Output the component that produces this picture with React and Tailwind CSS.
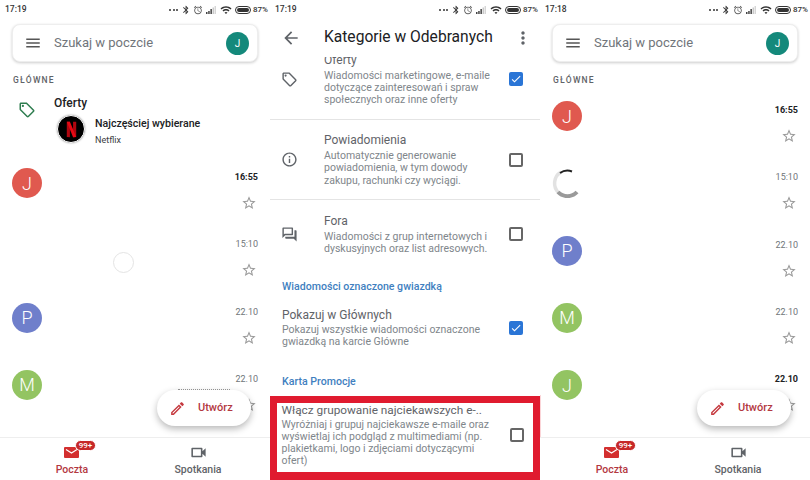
import React from "react";

const paths = {
  menu: "M3 18h18v-2H3v2zm0-5h18v-2H3v2zm0-7v2h18V6H3z",
  back: "M20 11H7.83l5.59-5.59L12 4l-8 8 8 8 1.41-1.41L7.83 13H20v-2z",
  more: "M12 8c1.1 0 2-.9 2-2s-.9-2-2-2-2 .9-2 2 .9 2 2 2zm0 2c-1.1 0-2 .9-2 2s.9 2 2 2 2-.9 2-2-.9-2-2-2zm0 6c-1.1 0-2 .9-2 2s.9 2 2 2 2-.9 2-2-.9-2-2-2z",
  tag: "M21.41 11.58l-9-9C12.05 2.22 11.55 2 11 2H4c-1.1 0-2 .9-2 2v7c0 .55.22 1.05.59 1.42l9 9c.36.36.86.58 1.41.58s1.05-.22 1.41-.59l7-7c.37-.36.59-.86.59-1.41s-.23-1.06-.59-1.42zM13 20.01L4 11V4h7v-.01l9 9-7 7.02zM6.5 5A1.5 1.5 0 1 0 6.5 8 1.5 1.5 0 1 0 6.5 5z",
  info: "M11 7h2v2h-2zm0 4h2v6h-2zm1-9C6.48 2 2 6.48 2 12s4.48 10 10 10 10-4.48 10-10S17.52 2 12 2zm0 18c-4.41 0-8-3.59-8-8s3.59-8 8-8 8 3.59 8 8-3.59 8-8 8z",
  forum: "M15 4v7H5.17L4 12.17V4h11m1-2H3c-.55 0-1 .45-1 1v14l4-4h10c.55 0 1-.45 1-1V3c0-.55-.45-1-1-1zm5 4h-2v9H6v2c0 .55.45 1 1 1h11l4 4V7c0-.55-.45-1-1-1z",
  star: "M22 9.24l-7.19-.62L12 2 9.19 8.63 2 9.24l5.46 4.73L5.82 21 12 17.27 18.18 21l-1.63-7.03L22 9.24zM12 15.4l-3.76 2.27 1-4.28-3.32-2.88 4.38-.38L12 6.1l1.71 4.04 4.38.38-3.32 2.88 1 4.28L12 15.4z",
  pencil: "M3 17.25V21h3.75L17.81 9.94l-3.75-3.75L3 17.25zM5.92 19H5v-.92l9.06-9.06.92.92L5.92 19zM20.71 5.63l-2.34-2.34c-.2-.2-.45-.29-.71-.29s-.51.1-.7.29l-1.83 1.83 3.75 3.75 1.83-1.83c.39-.39.39-1.02 0-1.41z",
  video: "M15 8v8H5V8h10m1-2H4c-.55 0-1 .45-1 1v10c0 .55.45 1 1 1h12c.55 0 1-.45 1-1v-3.5l4 4v-11l-4 4V7c0-.55-.45-1-1-1z",
  bluetooth: "M17.71 7.71L12 2h-1v7.59L6.41 5 5 6.41 10.59 12 5 17.59 6.41 19 11 14.41V22h1l5.71-5.71-4.3-4.29 4.3-4.29zM13 5.83l1.88 1.88L13 9.59V5.83zm1.88 10.46L13 18.17v-3.76l1.88 1.88z",
  alarm: "M22 5.72l-4.6-3.86-1.29 1.53 4.6 3.86L22 5.72zM7.88 3.39L6.6 1.86 2 5.71l1.29 1.53 4.59-3.85zM12.5 8H11v6l4.75 2.85.75-1.23-4-2.37V8zM12 4c-4.97 0-9 4.03-9 9s4.03 9 9 9 9-4.03 9-9-4.03-9-9-9zm0 16c-3.87 0-7-3.13-7-7s3.13-7 7-7 7 3.13 7 7-3.13 7-7 7z",
  wifi: "M1 9l2 2c4.97-4.97 13.03-4.97 18 0l2-2C16.93 2.93 7.08 2.93 1 9zm8 8l3 3 3-3c-1.65-1.66-4.34-1.66-6 0zm-4-4l2 2c2.76-2.76 7.24-2.76 10 0l2-2C15.14 9.14 8.87 9.14 5 13z",
  check: "M9 16.17L4.83 12l-1.42 1.41L9 19 21 7l-1.41-1.41z",
};

function Icon({ name, className }) {
  return (
    <svg viewBox="0 0 24 24" fill="currentColor" className={className}>
      <path d={paths[name]} />
    </svg>
  );
}

function StatusBar({ time }) {
  return (
    <div className="h-[18px] pt-[1px] flex items-center justify-between pl-[5px] pr-[2px] text-[8.5px] font-medium text-[#333]">
      <span>{time}</span>
      <div className="flex items-center">
        <span className="flex gap-[1.5px] mr-[3px]">
          <i className="w-[2px] h-[2px] bg-[#333] rounded-full" />
          <i className="w-[2px] h-[2px] bg-[#333] rounded-full" />
          <i className="w-[2px] h-[2px] bg-[#333] rounded-full" />
        </span>
        <Icon name="bluetooth" className="w-[10px] h-[10px]" />
        <Icon name="alarm" className="w-[10px] h-[10px] ml-[2px] text-[#555]" />
        <svg viewBox="0 0 10 8" className="w-[10px] h-[8px] ml-[3px]">
          <rect x="0" y="6" width="1.5" height="2" fill="#444" />
          <rect x="2.2" y="5" width="1.5" height="3" fill="#444" />
          <rect x="4.4" y="3" width="1.5" height="5" fill="#444" />
          <rect x="6.6" y="1.5" width="1.2" height="6.5" fill="#bbb" />
          <rect x="8.6" y="0" width="1.2" height="8" fill="#ccc" />
        </svg>
        <Icon name="wifi" className="w-[12px] h-[12px] ml-[4px]" />
        <span className="w-[16px] h-[8px] ml-[3px] rounded-full border border-[#333] p-[1px] flex">
          <i className="flex-1 bg-[#333] rounded-full" />
        </span>
        <span className="ml-[2px] text-[8px]">87%</span>
      </div>
    </div>
  );
}

function SearchCard() {
  return (
    <div className="mx-3 mt-[6px] h-[38px] rounded-lg bg-white border border-[#eee] shadow-[0_1px_3px_rgba(0,0,0,0.2)] flex items-center pl-[11px] pr-[8px]">
      <Icon name="menu" className="w-[18px] h-[18px] text-[#555]" />
      <span className="ml-[12px] flex-1 text-[13px] text-[#70757a]">Szukaj w poczcie</span>
      <span className="w-[23px] h-[23px] rounded-full bg-[#14897b] text-white text-[10px] flex items-center justify-center">J</span>
    </div>
  );
}

function SectionLabel() {
  return (
    <div className="mt-[13px] h-[10px] pl-[13px] text-[8.5px] leading-[10px] font-medium tracking-[0.14em] text-[#5f6368]">
      GŁÓWNE
    </div>
  );
}

function MailRow({ letter, color, time, bold, slot }) {
  return (
    <div className="relative h-[67.33px] shrink-0 flex pl-3 pr-3">
      {letter ? (
        <span className={`w-[30px] h-[30px] rounded-full text-white text-[18px] font-light flex items-center justify-center ${color}`}>
          {letter}
        </span>
      ) : (
        slot
      )}
      <div className="ml-auto flex flex-col items-end pt-[3px]">
        <span className={`h-[12px] text-[9px] leading-[12px] ${bold ? "font-bold text-[#202124]" : "text-[#70757a]"}`}>{time}</span>
        <Icon name="star" className="w-[16px] h-[16px] mt-[12px] mr-[1px] text-[#9a9a9a]" />
      </div>
    </div>
  );
}

function Spinner() {
  return (
    <svg viewBox="0 0 30 30" className="w-[30px] h-[30px]">
      <path d="M9 4 A13 13 0 0 0 7 25" fill="none" stroke="#e2e2e2" strokeWidth="3.5" />
      <path d="M8 5 A13 13 0 0 1 20 3.5" fill="none" stroke="#222" strokeWidth="2" />
      <path d="M6 24 A13 13 0 0 0 25 24" fill="none" stroke="#9a9a9a" strokeWidth="4" />
    </svg>
  );
}

function Fab() {
  return (
    <div className="absolute right-[19px] bottom-[54px] w-[94px] h-[36px] rounded-full bg-white shadow-[0_3px_7px_rgba(0,0,0,0.28)] flex items-center pl-[12px] text-[#b3383f]">
      <Icon name="pencil" className="w-[17px] h-[17px] text-[#c5393f]" />
      <span className="ml-[12px] text-[11px] font-medium">Utwórz</span>
    </div>
  );
}

function BottomNav() {
  return (
    <div className="relative z-10 h-[43px] shrink-0 bg-white border-t border-[#eee] flex justify-center">
      <div className="w-[126px] flex flex-col items-center">
        <div className="relative h-[24px] w-[16px]">
          <svg viewBox="0 0 15 11" className="absolute left-0 top-[9px] w-[15px] h-[11px]">
            <rect width="15" height="11" rx="1" fill="#d32f2f" />
            <path d="M2 2.5 L7.5 6 L13 2.5" fill="none" stroke="#fff" strokeWidth="1.2" />
          </svg>
          <span className="absolute left-[11px] top-[2px] w-[21px] h-[11px] rounded-full bg-[#c62828] border border-white text-white text-[8px] leading-[9px] font-medium text-center">
            99+
          </span>
        </div>
        <span className="mt-[1px] text-[10.5px] leading-[13px] font-medium text-[#b3383f]">Poczta</span>
      </div>
      <div className="w-[126px] flex flex-col items-center text-[#5f6368]">
        <div className="h-[24px] flex items-end">
          <Icon name="video" className="w-[19px] h-[19px]" />
        </div>
        <span className="mt-[1px] text-[10.5px] leading-[13px] font-medium">Spotkania</span>
      </div>
    </div>
  );
}

function Panel({ children }) {
  return <div className="relative w-[270px] h-[480px] shrink-0 overflow-hidden bg-white flex flex-col">{children}</div>;
}

function NetflixLogo() {
  return (
    <span className="w-[28px] h-[28px] rounded-full bg-black border border-white shadow-[0_0_2px_rgba(0,0,0,0.4)] flex items-center justify-center">
      <svg viewBox="0 0 14 20" className="w-[11px] h-[17px]">
        <path d="M1 0h4v20l-4-0.6z" fill="#b0060f" />
        <path d="M9 0h4v19.4l-4 0.6z" fill="#b0060f" />
        <path d="M1 0h4l8 19.4-4 0.6z" fill="#e50914" />
      </svg>
    </span>
  );
}

function MainList() {
  return (
    <Panel>
      <StatusBar time="17:19" />
      <SearchCard />
      <SectionLabel />
      <div className="flex-1 overflow-hidden">
        <div className="h-[83px] flex pl-[18px]">
          <Icon name="tag" className="w-[18px] h-[18px] mt-[16px] text-[#2e7d4f]" />
          <div className="ml-[18px] pt-[10px]">
            <div className="h-[16px] text-[12px] leading-[16px] font-medium text-[#202124]">Oferty</div>
            <div className="flex ml-[3px] mt-[4px]">
              <NetflixLogo />
              <div className="ml-[10px]">
                <div className="text-[10.6px] leading-[14px] font-medium text-[#202124] mt-[2px]">Najczęściej wybierane</div>
                <div className="text-[9px] leading-[12px] mt-[3px] text-[#3c4043]">Netflix</div>
              </div>
            </div>
          </div>
        </div>
        <MailRow letter="J" color="bg-[#e0594f]" time="16:55" bold />
        <MailRow
          time="15:10"
          slot={<span className="absolute left-[113px] top-[17px] w-[21px] h-[21px] rounded-full border border-[#e4e4e4]" />}
        />
        <MailRow letter="P" color="bg-[#6f7fcb]" time="22.10" />
        <MailRow letter="M" color="bg-[#93c462]" time="22.10" />
      </div>
      {/* half-rendered line of text behind the button */}
      <span className="absolute left-[178px] top-[389px] w-[52px] border-t border-dotted border-[#999]" />
      <Fab />
      <BottomNav />
    </Panel>
  );
}

function Checkbox({ checked }) {
  return checked ? (
    <span className="w-[14px] h-[14px] shrink-0 rounded-[2px] bg-[#2a75d6] flex items-center justify-center">
      <Icon name="check" className="w-[12px] h-[12px] text-white" />
    </span>
  ) : (
    <span className="w-[14px] h-[14px] shrink-0 rounded-[2px] border-2 border-[#666]" />
  );
}

function CategoryRow({ icon, title, lines, checked, height }) {
  return (
    <div className={`flex items-center pl-[11px] pr-[17px] ${height}`}>
      <Icon name={icon} className="w-[17px] h-[17px] shrink-0 text-[#5f6368]" />
      <div className="ml-[26px] flex-1">
        <div className="text-[12px] leading-[16px] text-[#5f6368]">{title}</div>
        <div className="mt-[2px] text-[10.5px] leading-[12.3px] text-[#80868b] whitespace-pre-line">{lines}</div>
      </div>
      <Checkbox checked={checked} />
    </div>
  );
}

function Settings() {
  return (
    <Panel>
      <StatusBar time="17:19" />
      <div className="relative z-10 h-[39px] shrink-0 bg-white flex items-center pl-[11px] pr-[7px]">
        <Icon name="back" className="w-[20px] h-[20px] text-[#5f6368]" />
        <span className="ml-[23px] flex-1 text-[15.6px] text-[#202124]">Kategorie w Odebranych</span>
        <Icon name="more" className="w-[20px] h-[20px] text-[#5f6368]" />
      </div>
      <div className="flex-1 overflow-hidden">
        <div className="-mt-[18px]">
          <CategoryRow
            icon="tag"
            title="Oferty"
            lines={"Wiadomości marketingowe, e-maile\ndotyczące zainteresowań i spraw\nspołecznych oraz inne oferty"}
            checked
            height="h-[80px]"
          />
          <div className="h-px bg-[#e4e4e4]" />
          <CategoryRow
            icon="info"
            title="Powiadomienia"
            lines={"Automatycznie generowanie\npowiadomienia, w tym dowody\nzakupu, rachunki czy wyciągi."}
            height="h-[79px]"
          />
          <div className="h-px bg-[#e4e4e4]" />
          <CategoryRow
            icon="forum"
            title="Fora"
            lines={"Wiadomości z grup internetowych i\ndyskusyjnych oraz list adresowych."}
            height="h-[68px]"
          />
          <div className="mt-[11px] pl-3 text-[10.6px] leading-[16px] font-medium text-[#3f7fbf]">Wiadomości oznaczone gwiazdką</div>
          <div className="mt-[12px] pl-3 pr-[17px] flex items-center">
            <div className="flex-1">
              <div className="text-[12px] leading-[16px] text-[#5f6368]">Pokazuj w Głównych</div>
              <div className="mt-[1px] text-[10.5px] leading-[12.3px] text-[#80868b]">
                Pokazuj wszystkie wiadomości oznaczone
                <br />
                gwiazdką na karcie Główne
              </div>
            </div>
            <Checkbox checked />
          </div>
          <div className="mt-[25px] pl-3 text-[10.6px] leading-[16px] font-medium text-[#3f7fbf]">Karta Promocje</div>
          <div className="mt-[6px] h-[85px] border-x-[7.5px] border-t-[7.5px] border-b-[9.5px] border-[#e01b2f] pl-[4.5px] pr-[9.5px] pb-[5px] flex items-center">
            <div className="flex-1">
              <div className="text-[11.8px] leading-[16px] text-[#5f6368] whitespace-nowrap">Włącz grupowanie najciekawszych e-..</div>
              <div className="mt-[1px] text-[10.5px] leading-[12.3px] text-[#80868b]">
                Wyróżniaj i grupuj najciekawsze e-maile oraz
                <br />
                wyświetlaj ich podgląd z multimediami (np.
                <br />
                plakietkami, logo i zdjęciami dotyczącymi
                <br />
                ofert)
              </div>
            </div>
            <Checkbox />
          </div>
        </div>
      </div>
    </Panel>
  );
}

function InboxList() {
  return (
    <Panel>
      <StatusBar time="17:18" />
      <SearchCard />
      <SectionLabel />
      <div className="flex-1 overflow-hidden pt-[16px]">
        <MailRow letter="J" color="bg-[#e0594f]" time="16:55" bold />
        <MailRow time="15:10" slot={<Spinner />} />
        <MailRow letter="P" color="bg-[#6f7fcb]" time="22.10" />
        <MailRow letter="M" color="bg-[#93c462]" time="22.10" />
        <MailRow letter="J" color="bg-[#93c462]" time="22.10" bold />
      </div>
      {/* red frame bleeds a little into this screenshot */}
      <span className="absolute left-0 bottom-0 w-px h-[85px] bg-[#fbd5d8]" />
      <Fab />
      <BottomNav />
    </Panel>
  );
}

export default function App() {
  return (
    <div className="flex w-[810px] h-[480px] overflow-hidden bg-white font-['Roboto',sans-serif]">
      <MainList />
      <Settings />
      <InboxList />
    </div>
  );
}
